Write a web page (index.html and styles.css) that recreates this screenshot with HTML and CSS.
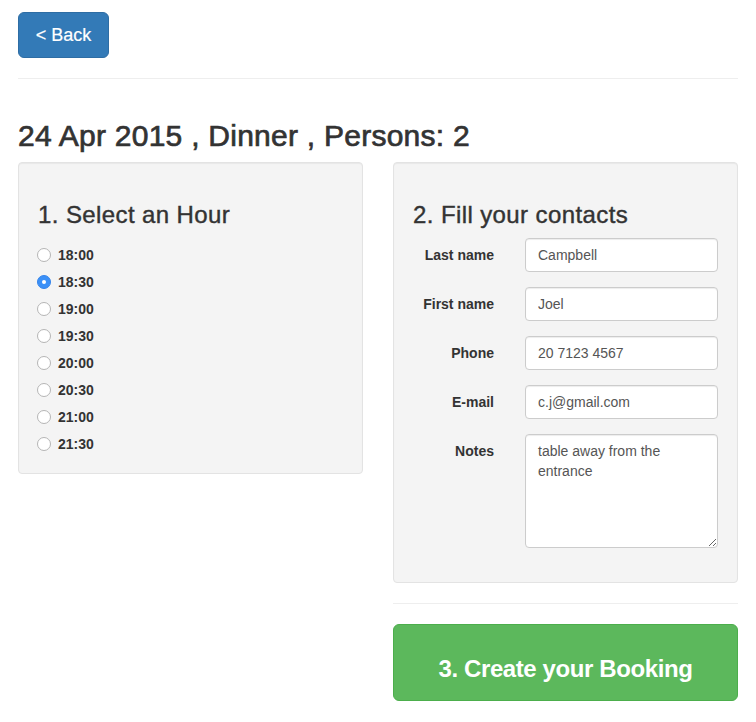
FILE: index.html
```html
<!DOCTYPE html>
<html lang="en">
<head>
<meta charset="utf-8">
<title>Booking</title>
<link rel="stylesheet" href="styles.css">
</head>
<body>
<div class="page">
  <div class="top">
    <button class="btn btn-back" type="button">&lt; Back</button>
  </div>
  <hr class="sep">
  <h2 class="title">24 Apr 2015 , Dinner , Persons: 2</h2>
  <div class="cols">
    <div class="col">
      <div class="well well-hours">
        <h3 class="step">1. Select an Hour</h3>
        <div class="radios">
          <label class="radio"><input type="radio" name="hour"><span>18:00</span></label>
          <label class="radio"><input type="radio" name="hour" checked><span>18:30</span></label>
          <label class="radio"><input type="radio" name="hour"><span>19:00</span></label>
          <label class="radio"><input type="radio" name="hour"><span>19:30</span></label>
          <label class="radio"><input type="radio" name="hour"><span>20:00</span></label>
          <label class="radio"><input type="radio" name="hour"><span>20:30</span></label>
          <label class="radio"><input type="radio" name="hour"><span>21:00</span></label>
          <label class="radio"><input type="radio" name="hour"><span>21:30</span></label>
        </div>
      </div>
    </div>
    <div class="col">
      <div class="well">
        <h3 class="step">2. Fill your contacts</h3>
        <form class="form">
          <label class="form-label" for="ln">Last name</label>
          <input class="form-control" id="ln" type="text" value="Campbell">
          <label class="form-label" for="fn">First name</label>
          <input class="form-control" id="fn" type="text" value="Joel">
          <label class="form-label" for="ph">Phone</label>
          <input class="form-control" id="ph" type="text" value="20 7123 4567">
          <label class="form-label" for="em">E-mail</label>
          <input class="form-control" id="em" type="text" value="c.j@gmail.com">
          <label class="form-label" for="nt">Notes</label>
          <textarea class="form-control textarea" id="nt" rows="5">table away from the entrance</textarea>
        </form>
      </div>
      <hr class="sep sep-right">
      <button class="btn btn-book" type="button">3. Create your Booking</button>
    </div>
  </div>
</div>
</body>
</html>
```

FILE: styles.css
```css
* { box-sizing: border-box; }

html, body {
  margin: 0;
  padding: 0;
  background: #fff;
}

body {
  font-family: "Liberation Sans", Arial, Helvetica, sans-serif;
  font-size: 14px;
  line-height: 20px;
  color: #333;
}

.page {
  padding: 12px 18px 0 18px;
}

.top {
  display: flex;
}

.btn {
  font-family: inherit;
  border: 1px solid transparent;
  border-radius: 6px;
  cursor: pointer;
  color: #fff;
}

.btn-back {
  background: #337ab7;
  border-color: #2e6da4;
  font-size: 18px;
  line-height: 24px;
  padding: 10px 16px;
  width: 91px;
  -webkit-text-stroke: 0.2px #fff;
}

.sep {
  border: 0;
  border-top: 1px solid #eee;
  margin: 20px 0 0 0;
  height: 0;
}

.title {
  font-size: 30px;
  line-height: 33px;
  font-weight: normal;
  letter-spacing: 0.25px;
  -webkit-text-stroke: 0.7px #333;
  margin: 40px 0 10px 0;
}

.cols {
  display: grid;
  grid-template-columns: 345px 345px;
  column-gap: 30px;
  align-items: start;
}

.col {
  display: flex;
  flex-direction: column;
}

.well {
  background: #f4f4f4;
  border: 1px solid #e3e3e3;
  border-radius: 4px;
  box-shadow: inset 0 1px 1px rgba(0, 0, 0, 0.05);
  padding: 19px;
}

.step {
  font-size: 24px;
  line-height: 26px;
  font-weight: normal;
  letter-spacing: 0.4px;
  -webkit-text-stroke: 0.4px #333;
  margin: 20px 0 10px 0;
}

.radios {
  display: flex;
  flex-direction: column;
  gap: 7px;
  padding-top: 7px;
}

.radio {
  display: flex;
  align-items: center;
  height: 20px;
  font-weight: bold;
  font-size: 14px;
}

.radio input {
  -webkit-appearance: none;
  appearance: none;
  width: 14px;
  height: 14px;
  margin: 0 7px 0 -1px;
  border-radius: 50%;
  border: 1px solid #b5b5b5;
  background: #fff;
  position: relative;
  flex: none;
}

.radio input:checked {
  background: #3b90f7;
  border-color: #3584ea;
}

.radio input:checked::after {
  content: "";
  position: absolute;
  left: 4px;
  top: 4px;
  width: 4px;
  height: 4px;
  border-radius: 50%;
  background: #fff;
}

.form {
  display: grid;
  grid-template-columns: 81px 1fr;
  column-gap: 31px;
  row-gap: 15px;
  margin: 0 0 15px 0;
}

.form-label {
  font-weight: bold;
  text-align: right;
  padding-top: 7px;
  line-height: 20px;
}

.form-control {
  display: block;
  width: 100%;
  height: 34px;
  padding: 6px 12px;
  font-family: inherit;
  font-size: 14px;
  line-height: 20px;
  color: #555;
  background: #fff;
  border: 1px solid #ccc;
  border-radius: 4px;
  box-shadow: inset 0 1px 1px rgba(0, 0, 0, 0.075);
  margin: 0;
}

.textarea {
  height: 114px;
  resize: vertical;
}

.sep-right {
  margin-top: 20px;
}

.btn-book {
  margin-top: 20px;
  background: #5cb85c;
  border-color: #4cae4c;
  font-size: 24px;
  font-weight: bold;
  line-height: 32px;
  letter-spacing: -0.4px;
  padding: 28px 16px 15px 16px;
  width: 100%;
}
```
